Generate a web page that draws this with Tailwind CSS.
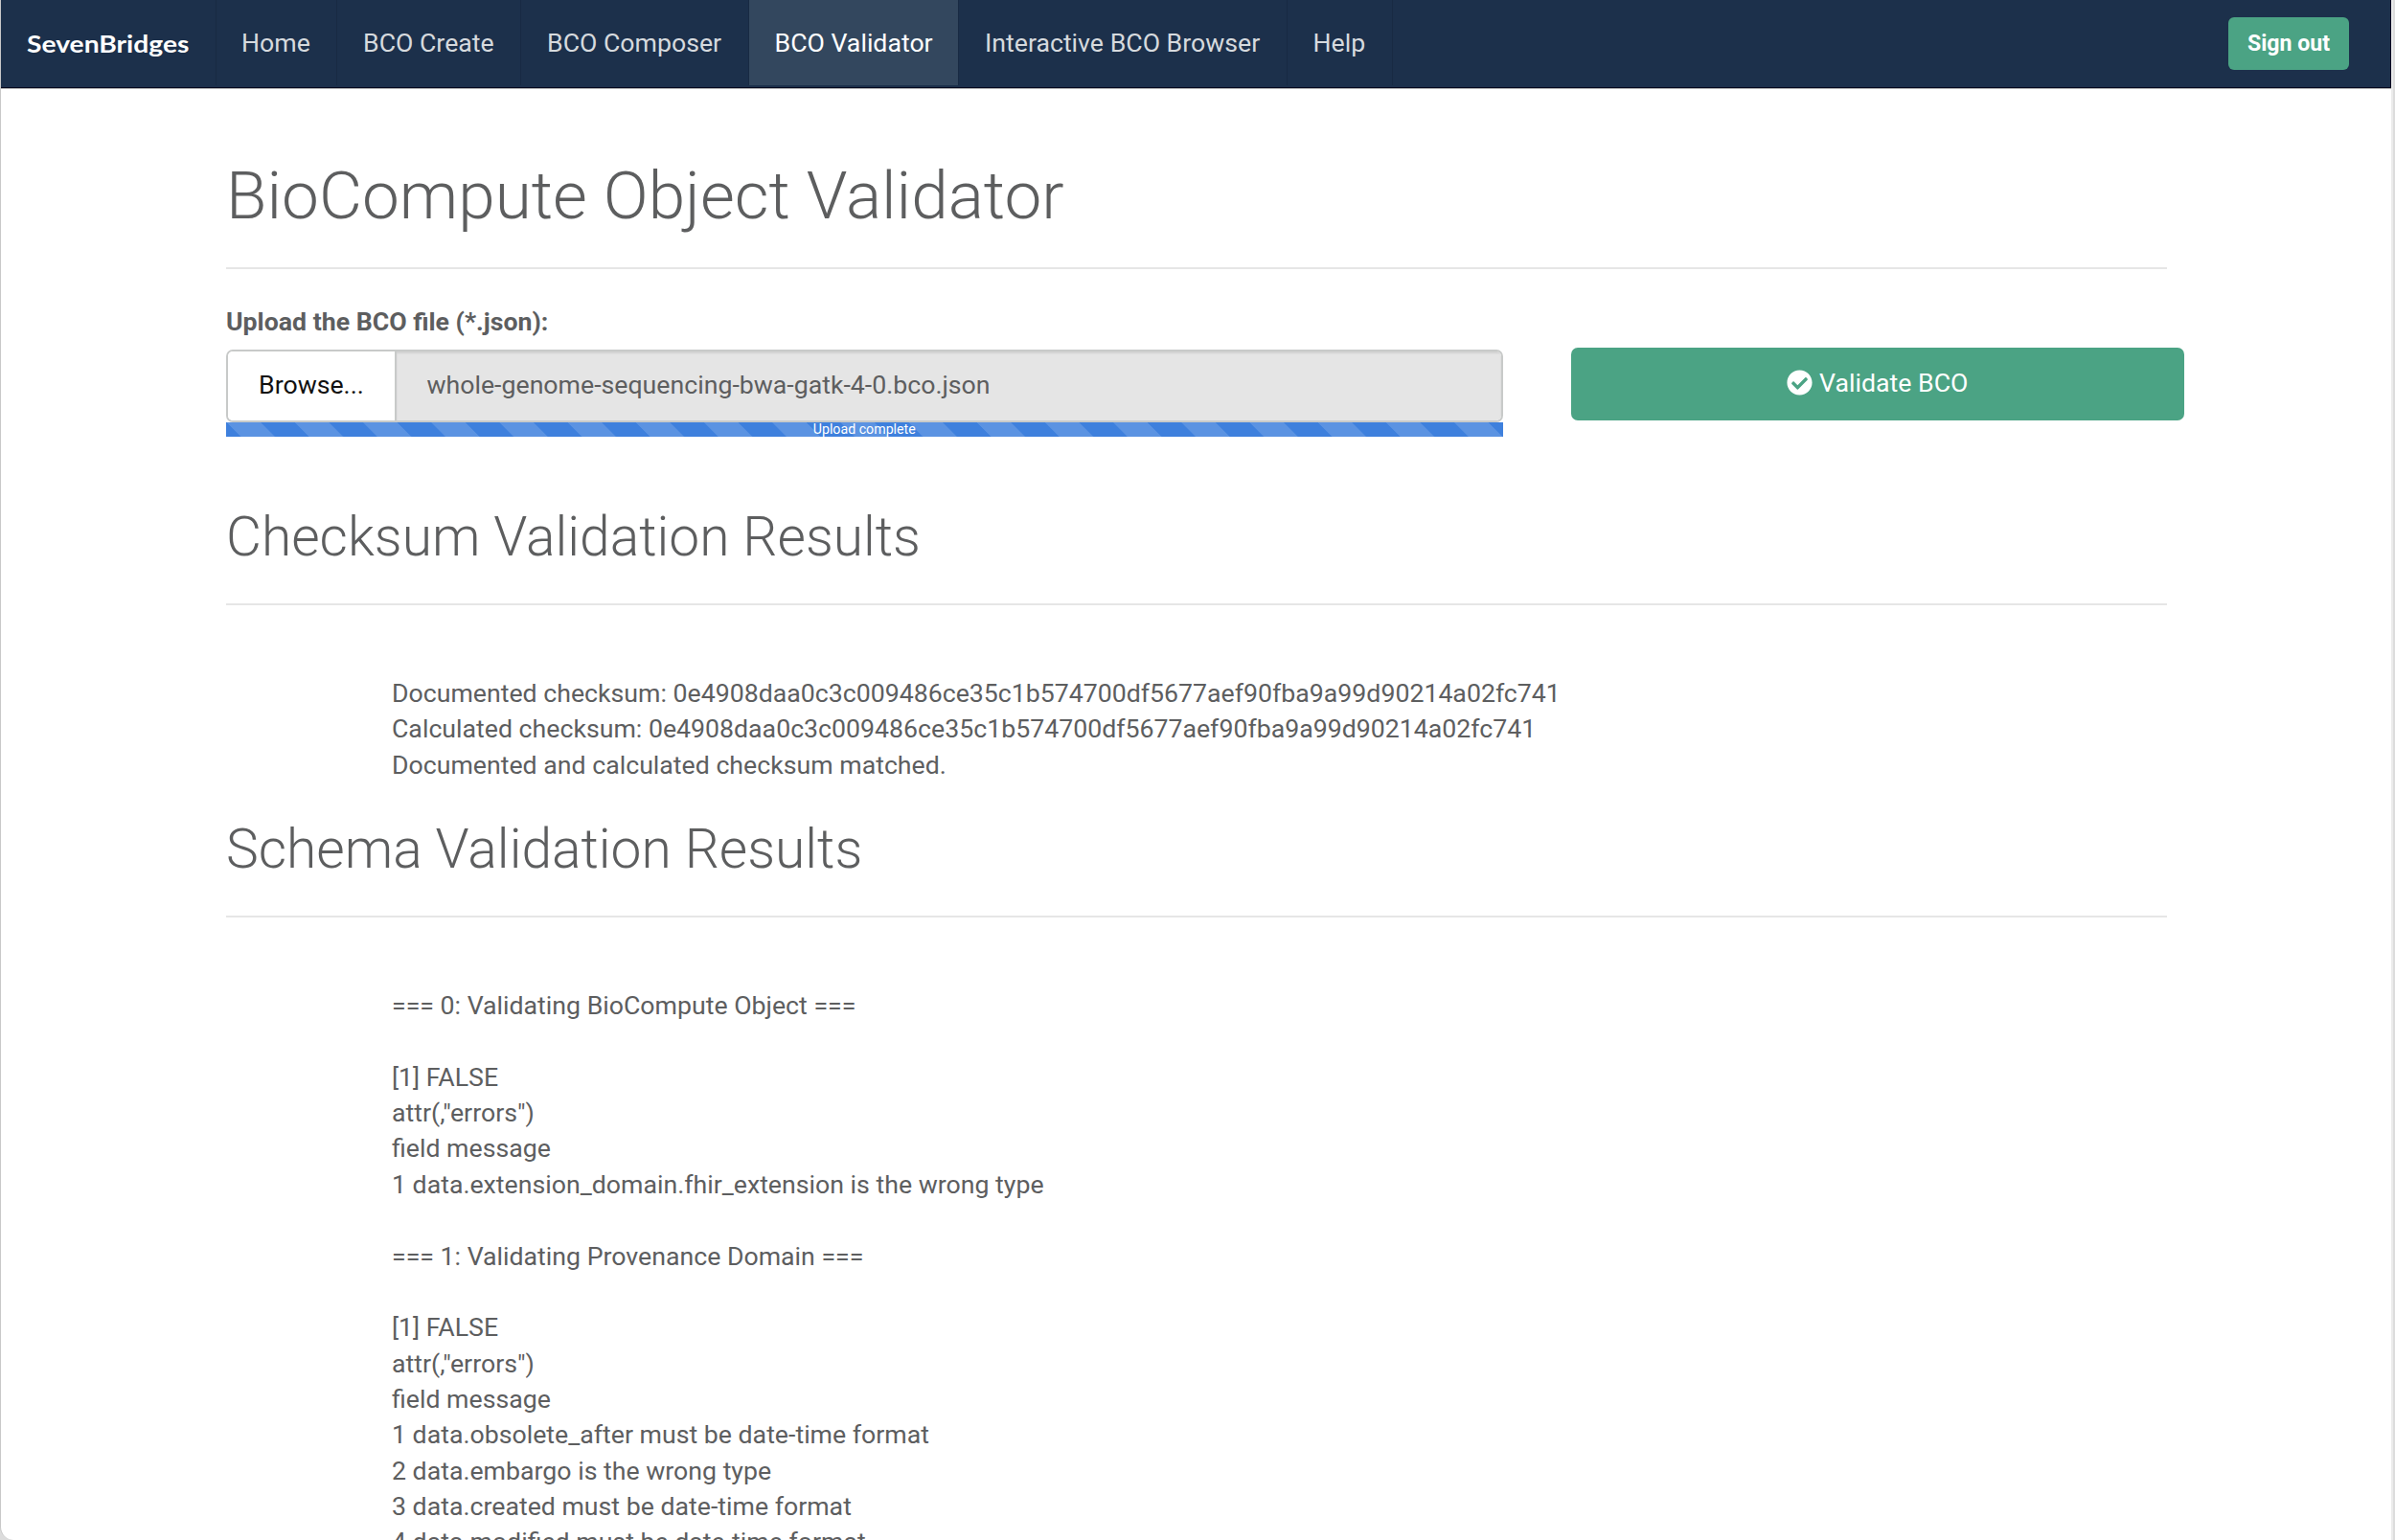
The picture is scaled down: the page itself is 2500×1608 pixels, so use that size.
<!DOCTYPE html>
<html lang="en">
<head>
<meta charset="utf-8">
<title>BioCompute Object Validator</title>
<script src="https://cdn.jsdelivr.net/npm/@tailwindcss/browser@4"></script>
</head>
<body class="h-[1608px] overflow-hidden bg-[#dcdcdc] font-['Roboto',sans-serif] text-[26.7px] leading-[37.36px] text-[#5d5e5f]">
<div class="flex h-[1608px] w-[2498px] flex-col overflow-hidden rounded-bl-[14px] border-r-2 border-l border-r-[#ebebeb] border-l-[#c8c8c8] bg-white">
  <nav class="flex h-[92px] w-[2495px] shrink-0 items-start border-r border-b border-[#020a20] bg-[#1c304b] text-[#d6dade] shadow-[0_1px_0_#b4b4b4]">
    <a class="flex h-[89px] w-[225px] items-center border-r border-[#182a43] pt-[2px] pl-[27px] font-['Lato'] text-[25.2px] font-bold text-white"><span class="inline-block origin-left scale-x-[1.12]">SevenBridges</span></a>
    <a class="flex h-[89px] w-[126px] items-center border-r border-[#182a43] pt-[2px] pl-[26px]">Home</a>
    <a class="flex h-[89px] w-[192px] items-center border-r border-[#182a43] pt-[2px] pl-[27px]">BCO Create</a>
    <a class="flex h-[89px] w-[238px] items-center border-r border-[#182a43] pt-[2px] pl-[27px]">BCO Composer</a>
    <a class="flex h-[89px] w-[219px] items-center border-r border-[#182a43] bg-[#33475e] pt-[2px] pl-[26.5px] text-white">BCO Validator</a>
    <a class="flex h-[89px] w-[343px] items-center border-r border-[#182a43] pt-[2px] pl-[27px]">Interactive BCO Browser</a>
    <a class="flex h-[89px] w-[110px] items-center border-r border-[#182a43] pt-[2px] pl-[26.5px]">Help</a>
    <button class="mt-[18px] mr-[43px] ml-auto h-[55px] w-[126px] rounded-[6px] bg-[#4ba384] pt-px text-[23.1px] font-bold text-white">Sign out</button>
  </nav>
  <main class="flex flex-col pl-[235px]">
    <h1 class="mt-[72px] h-[82px] text-[69.3px] leading-[82px] font-light">BioCompute Object Validator</h1>
    <hr class="mt-[33px] w-[2026px] border-t-2 border-[#e6e6e6]">
    <div class="flex items-start justify-between w-[2043.5px]">
      <div class="w-[1332.5px]">
        <label class="mt-[37px] block h-[37px] font-bold">Upload the BCO file (*.json):</label>
        <div class="mt-[10px] flex h-[76px] overflow-hidden rounded-[7px] border-2 border-[#c8cac9]">
          <span class="flex w-[175.5px] items-center border-r-2 border-[#c8cac9] bg-white pl-[32px] text-[#111]">Browse...</span>
          <span class="flex flex-1 items-center bg-[#e5e5e5] pl-[32px] shadow-[inset_0_2px_2px_rgba(0,0,0,0.09)]">whole-genome-sequencing-bwa-gatk-4-0.bco.json</span>
        </div>
        <div class="flex h-[15px] items-center justify-center overflow-hidden bg-[#3e80dd] bg-[linear-gradient(45deg,rgba(255,255,255,.15)_25%,transparent_25%,transparent_50%,rgba(255,255,255,.15)_50%,rgba(255,255,255,.15)_75%,transparent_75%,transparent)] bg-size-[71.2px_71.2px] text-[14.2px] leading-[15px] text-white">Upload complete</div>
      </div>
      <button class="mt-[82px] flex h-[76px] w-[639.5px] items-center justify-center gap-[7px] rounded-[7px] bg-[#4ba384] text-white">
        <svg class="mb-[3px] size-[27px]" viewBox="0 0 512 512" fill="currentColor"><path d="M504 256c0 136.967-111.033 248-248 248S8 392.967 8 256 119.033 8 256 8s248 111.033 248 248zM227.314 387.314l184-184c6.248-6.248 6.248-16.379 0-22.627l-22.627-22.627c-6.248-6.249-16.379-6.249-22.628 0L216 308.118l-70.059-70.059c-6.248-6.248-16.379-6.248-22.628 0l-22.627 22.627c-6.248 6.248-6.248 16.379 0 22.627l104 104c6.249 6.249 16.379 6.249 22.628.001z"/></svg>
        <span>Validate BCO</span>
      </button>
    </div>
    <h2 class="mt-[71px] h-[68px] text-[56.9px] leading-[68px] font-light">Checksum Validation Results</h2>
    <hr class="mt-[35px] w-[2026px] border-t-2 border-[#e6e6e6]">
    <div class="mt-[74px] h-[112px] pl-[173px] whitespace-nowrap">
      <p>Documented checksum: 0e4908daa0c3c009486ce35c1b574700df5677aef90fba9a99d90214a02fc741</p>
      <p>Calculated checksum: 0e4908daa0c3c009486ce35c1b574700df5677aef90fba9a99d90214a02fc741</p>
      <p>Documented and calculated checksum matched.</p>
    </div>
    <h2 class="mt-[35px] h-[68px] text-[56.9px] leading-[68px] font-light">Schema Validation Results</h2>
    <hr class="mt-[35px] w-[2026px] border-t-2 border-[#e6e6e6]">
    <div class="mt-[74px] pl-[173px] whitespace-pre-line">=== 0: Validating BioCompute Object ===

[1] FALSE
attr(,"errors")
field message
1 data.extension_domain.fhir_extension is the wrong type

=== 1: Validating Provenance Domain ===

[1] FALSE
attr(,"errors")
field message
1 data.obsolete_after must be date-time format
2 data.embargo is the wrong type
3 data.created must be date-time format
4 data.modified must be date-time format</div>
  </main>
</div>
</body>
</html>
